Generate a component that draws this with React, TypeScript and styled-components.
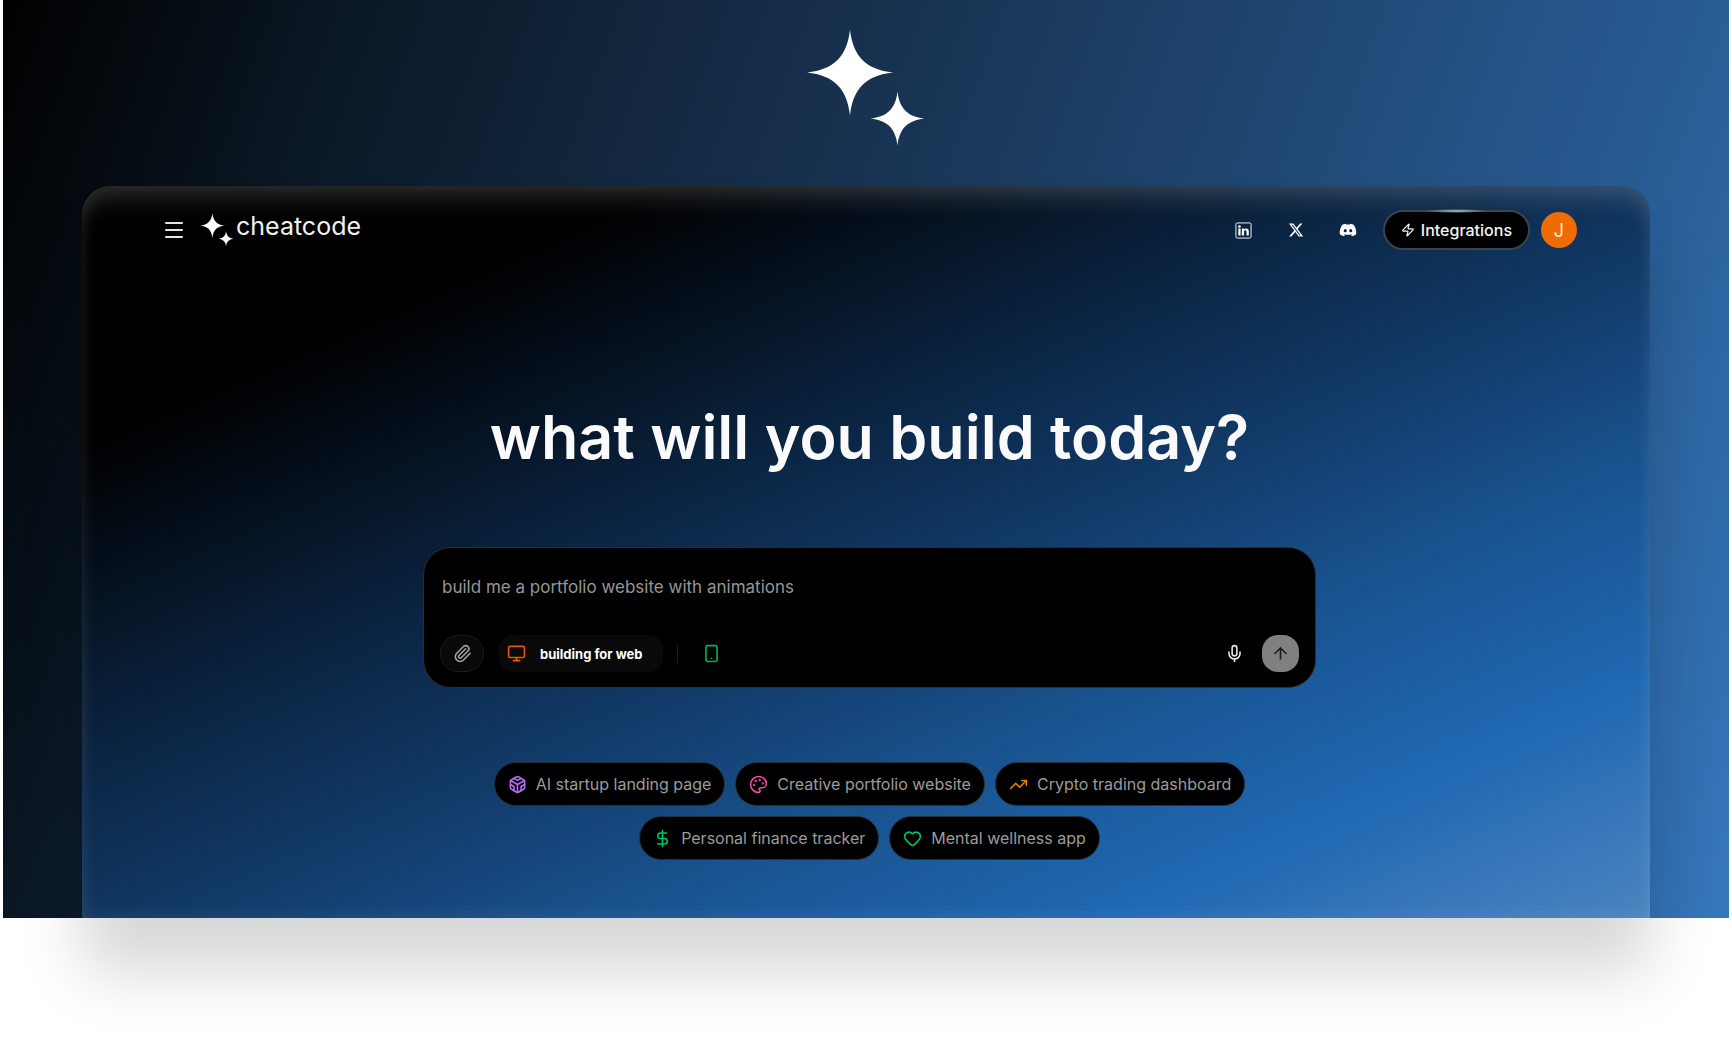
import React from "react";
import styled, { createGlobalStyle } from "styled-components";
import {
  ArrowUp,
  Codesandbox,
  DollarSign,
  Heart,
  Menu,
  Mic,
  Monitor,
  Palette,
  Paperclip,
  Smartphone,
  TrendingUp,
  Zap,
} from "lucide-react";
import { FaDiscord, FaXTwitter } from "react-icons/fa6";

const GlobalStyle = createGlobalStyle`
  *, *::before, *::after { box-sizing: border-box; }
  body {
    margin: 0;
    background: #ffffff;
    font-family: Inter, "Liberation Sans", sans-serif;
    -webkit-font-smoothing: antialiased;
  }
  button, input { font: inherit; }
`;

const Page = styled.div`
  min-height: 100vh;
  padding: 0 3px 120px;
  background: #ffffff;
`;

const Hero = styled.main`
  padding: 29px 79px 0;
  display: flex;
  flex-direction: column;
  align-items: center;
  gap: 39px;
  background: linear-gradient(
    110deg,
    #000000 0%,
    #0b1927 18%,
    #162e4a 40%,
    #1f4570 62%,
    #285c94 83%,
    #3677bc 100%
  );
`;

const Panel = styled.section`
  width: 100%;
  padding: 24px 73px 58px 80px;
  display: flex;
  flex-direction: column;
  border-radius: 28px 28px 0 0;
  background: linear-gradient(
    156deg,
    #000000 0%,
    #000000 18%,
    #0b2747 42%,
    #133f70 57%,
    #18508a 66%,
    #1b5a9b 73%,
    #1f68b3 83%,
    #4c84bf 100%
  );
  box-shadow:
    0 54px 64px rgba(0, 0, 0, 0.16),
    inset 0 22px 22px -8px rgba(255, 255, 255, 0.13),
    inset 0 0 20px rgba(255, 255, 255, 0.08);
`;

const Header = styled.header`
  display: flex;
  align-items: center;
  justify-content: space-between;
`;

const HeaderGroup = styled.div`
  display: flex;
  align-items: center;
`;

const IconButton = styled.button<{ $color?: string }>`
  display: grid;
  place-items: center;
  padding: 0;
  border: 0;
  background: none;
  color: ${(p) => p.$color ?? "#e5e5e5"};
  cursor: pointer;
`;

const Brand = styled.a`
  display: flex;
  align-items: flex-start;
  gap: 2px;
  margin-left: 14px;
  color: #f0f0f0;
  font-size: 25px;
  line-height: 26px;
  text-decoration: none;
`;

const Socials = styled.nav`
  display: flex;
  align-items: center;
  gap: 34px;
  margin-right: 26px;
`;

const SocialLink = styled.a`
  display: grid;
  place-items: center;
  width: 18px;
  height: 18px;
  color: #ffffff;
`;

const Integrations = styled.button`
  position: relative;
  display: flex;
  align-items: center;
  gap: 6px;
  height: 40px;
  padding: 0 16px;
  border: 2px solid #3a444f;
  border-radius: 20px;
  background: #000000;
  color: #f5f5f5;
  font-size: 16px;
  font-weight: 500;
  cursor: pointer;

  &::before {
    content: "";
    position: absolute;
    top: -3px;
    left: 28%;
    right: 28%;
    height: 4px;
    background: radial-gradient(closest-side, #b9bec6, transparent);
  }
`;

const Avatar = styled.button`
  width: 36px;
  height: 36px;
  margin-left: 11px;
  padding: 0;
  border: 0;
  border-radius: 50%;
  background: #ef6c00;
  color: #ffe9d6;
  font-size: 18px;
  cursor: pointer;
`;

const Title = styled.h1`
  margin: 147px 0 0;
  color: #fafafa;
  font-size: 61px;
  font-weight: 600;
  line-height: 80px;
  text-align: center;
`;

const Prompt = styled.form`
  width: 100%;
  max-width: 893px;
  margin: 70px auto 0;
  padding: 26px 16px 15px;
  display: flex;
  flex-direction: column;
  gap: 36px;
  border: 1px solid #2b2d30;
  border-radius: 28px;
  background: #000000;
`;

const PromptInput = styled.input`
  width: 100%;
  height: 25px;
  padding: 0 2px;
  border: 0;
  outline: 0;
  background: none;
  color: #ffffff;
  font-size: 17px;

  &::placeholder {
    color: #979797;
    opacity: 1;
  }
`;

const Toolbar = styled.div`
  display: flex;
  align-items: center;
`;

const AttachButton = styled(IconButton)`
  width: 44px;
  height: 37px;
  border: 1px solid #1b1b1b;
  border-radius: 18px;
  background: #090909;
`;

const PlatformButton = styled.button`
  display: flex;
  align-items: center;
  gap: 14px;
  height: 37px;
  margin-left: 15px;
  padding: 0 20px 0 8px;
  border: 0;
  border-radius: 14px;
  background: #090909;
  color: #ffffff;
  font-size: 13px;
  font-weight: 700;
  cursor: pointer;
`;

const Divider = styled.span`
  width: 1px;
  height: 18px;
  margin: 0 24px 0 14px;
  background: #1d1d1d;
`;

const ToolbarEnd = styled.div`
  display: flex;
  align-items: center;
  gap: 18px;
  margin-left: auto;
`;

const SendButton = styled(IconButton)`
  width: 37px;
  height: 37px;
  border-radius: 16px;
  background: #808080;
`;

const Suggestions = styled.div`
  width: 100%;
  max-width: 800px;
  margin: 74px auto 0;
  display: flex;
  flex-wrap: wrap;
  justify-content: center;
  gap: 10px;
`;

const Chip = styled.button`
  display: flex;
  align-items: center;
  gap: 9px;
  height: 44px;
  padding: 0 13px;
  border: 1px solid #25303b;
  border-radius: 22px;
  background: #000000;
  color: #9b9b9b;
  font-size: 16px;
  cursor: pointer;
`;

const STAR = "M0 -43C3 -16 16 -3 43 0C16 3 3 16 0 43C-3 16 -16 3 -43 0C-16 -3 -3 -16 0 -43Z";

function Sparkles({ size }: { size: number }) {
  return (
    <svg width={size} height={size} viewBox="0 0 118 118" fill="#ffffff" aria-hidden="true">
      <path d={STAR} transform="translate(43 43.5)" />
      <path d={STAR} transform="translate(90.5 89.5) scale(0.63)" />
    </svg>
  );
}

function LinkedinIcon() {
  return (
    <svg width="17" height="17" viewBox="0 0 18 18" fill="currentColor" aria-hidden="true">
      <rect x="1" y="1" width="16" height="16" rx="1.5" fill="none" stroke="currentColor" strokeWidth="1" />
      <circle cx="4.7" cy="4.8" r="1.4" />
      <path d="M3.5 7h2.400v7.300H3.500zM7.200 7h2.300v1c.5-.8 1.200-1.200 2.200-1.200 2 0 2.900 1.200 2.900 3.300v4.200h-2.400v-3.800c0-1.100-.3-1.700-1.100-1.700-1 0-1.500.7-1.500 1.800v3.700H7.200z" />
    </svg>
  );
}

const suggestions = [
  { label: "AI startup landing page", Icon: Codesandbox, color: "#b56cf5" },
  { label: "Creative portfolio website", Icon: Palette, color: "#ee4fa0" },
  { label: "Crypto trading dashboard", Icon: TrendingUp, color: "#f08000" },
  { label: "Personal finance tracker", Icon: DollarSign, color: "#00c860" },
  { label: "Mental wellness app", Icon: Heart, color: "#00c464" },
];

export default function App() {
  return (
    <Page>
      <GlobalStyle />
      <Hero>
        <Sparkles size={118} />
        <Panel>
          <Header>
            <HeaderGroup>
              <IconButton type="button" aria-label="Open menu">
                <Menu size={24} strokeWidth={2} />
              </IconButton>
              <Brand href="#">
                <Sparkles size={34} />
                cheatcode
              </Brand>
            </HeaderGroup>
            <HeaderGroup>
              <Socials aria-label="Social links">
                <SocialLink href="#" aria-label="LinkedIn">
                  <LinkedinIcon />
                </SocialLink>
                <SocialLink href="#" aria-label="X">
                  <FaXTwitter size={16} />
                </SocialLink>
                <SocialLink href="#" aria-label="Discord">
                  <FaDiscord size={18} />
                </SocialLink>
              </Socials>
              <Integrations type="button">
                <Zap size={14} strokeWidth={2} />
                Integrations
              </Integrations>
              <Avatar type="button">J</Avatar>
            </HeaderGroup>
          </Header>

          <Title>what will you build today?</Title>

          <Prompt onSubmit={(e) => e.preventDefault()}>
            <PromptInput
              type="text"
              aria-label="Describe what to build"
              placeholder="build me a portfolio website with animations"
            />
            <Toolbar>
              <AttachButton type="button" aria-label="Attach a file" $color="#a3a3a3">
                <Paperclip size={19} strokeWidth={2} />
              </AttachButton>
              <PlatformButton type="button">
                <Monitor size={19} strokeWidth={2} color="#e05a00" />
                building for web
              </PlatformButton>
              <Divider />
              <IconButton type="button" aria-label="Build for mobile" $color="#00b84a">
                <Smartphone size={19} strokeWidth={2} />
              </IconButton>
              <ToolbarEnd>
                <IconButton type="button" aria-label="Voice input">
                  <Mic size={19} strokeWidth={2} />
                </IconButton>
                <SendButton type="submit" aria-label="Send" $color="#1a1a1a">
                  <ArrowUp size={19} strokeWidth={2} />
                </SendButton>
              </ToolbarEnd>
            </Toolbar>
          </Prompt>

          <Suggestions>
            {suggestions.map(({ label, Icon, color }) => (
              <Chip type="button" key={label}>
                <Icon size={19} strokeWidth={2} color={color} />
                {label}
              </Chip>
            ))}
          </Suggestions>
        </Panel>
      </Hero>
    </Page>
  );
}
